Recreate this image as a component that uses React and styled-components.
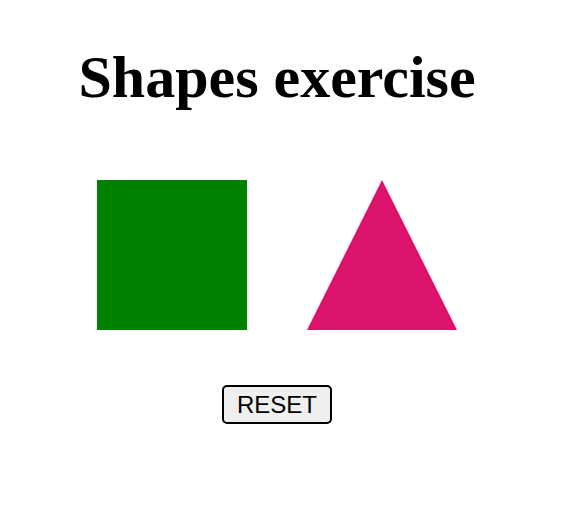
import React, { useState } from "react";
import styled, { createGlobalStyle } from "styled-components";

const GlobalStyle = createGlobalStyle`
  body {
    margin: 0;
    background: #ffffff;
  }
`;

const Page = styled.div`
  width: 538px;
  margin-left: 8px;
  padding-top: 44px;
  display: flex;
  flex-direction: column;
  align-items: center;
`;

const Title = styled.h1`
  margin: 0;
  font-family: "Liberation Serif", "Times New Roman", serif;
  font-weight: bold;
  font-size: 60px;
  line-height: 67px;
  color: #000;
`;

const ShapeRow = styled.div`
  margin-top: 69px;
  display: flex;
  gap: 60px;
`;

const Square = styled.div`
  width: 150px;
  height: 150px;
  background: ${(p) => p.color};
`;

const Triangle = styled.div`
  width: 0;
  height: 0;
  border-left: 75px solid transparent;
  border-right: 75px solid transparent;
  border-bottom: 150px solid ${(p) => p.color};
`;

const ResetButton = styled.button`
  margin-top: 55px;
  padding: 4px 13px;
  font-family: "Liberation Sans", Arial, sans-serif;
  font-size: 24px;
  line-height: 27px;
  color: #000;
  background: #efefef;
  border: 2px solid #000;
  border-radius: 5px;
  cursor: pointer;
`;

export default function App() {
  const [colors, setColors] = useState({ square: "#008000", triangle: "#dc136c" });

  return (
    <>
      <GlobalStyle />
      <Page>
        <Title>Shapes exercise</Title>
        <ShapeRow>
          <Square color={colors.square} />
          <Triangle color={colors.triangle} />
        </ShapeRow>
        <ResetButton onClick={() => setColors({ square: "#008000", triangle: "#dc136c" })}>
          RESET
        </ResetButton>
      </Page>
    </>
  );
}
